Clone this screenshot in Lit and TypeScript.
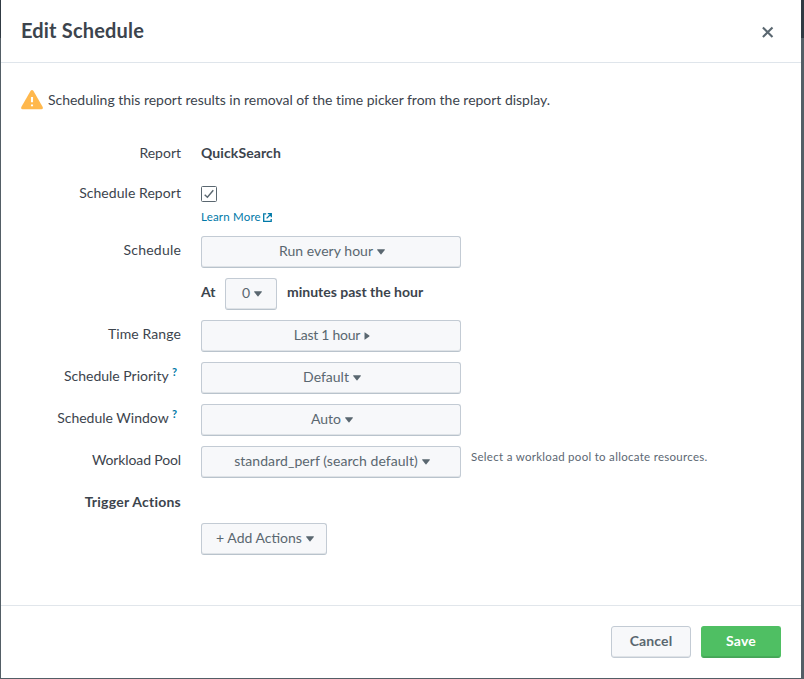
import { LitElement, html, nothing, css } from "lit";
import { customElement, property } from "lit/decorators.js";

@customElement("menu-button")
class MenuButton extends LitElement {
  @property() label = "";
  @property() caret = "down";
  @property({ type: Number }) tracking = 0;

  static styles = css`
    :host { display: flex; box-sizing: border-box; height: 32px; }
    .button {
      flex: 1; display: flex; align-items: center; justify-content: center;
      box-sizing: border-box; height: 32px; padding: 0 0 1px 2px; gap: 4px;
      border: 1px solid #c3cbd4; border-bottom-color: #b9c3cc; border-radius: 3px;
      box-shadow: inset 0 -1px 0 #dfe3e7;
      background: #f7f8fa; color: #5a6770; font: 14px "Lato", sans-serif; white-space: nowrap;
    }
    .text { margin-bottom: 2px; }
    svg { display: block; fill: #5a6770; flex: none; }
  `;

  render() {
    return html`<button class="button">
      <span class="text" style="letter-spacing:${this.tracking}px">${this.label}</span>
      ${this.caret === "right"
        ? html`<svg width="6" height="8" viewBox="0 0 6 8"><path d="M.5.7v6.6Q.5 8 1 7.5L5.3 4.4q.5-.4 0-.8L1 .5Q.5 0 .5.7z"/></svg>`
        : html`<svg width="8" height="6" viewBox="0 0 8 6"><path d="M.7.3h6.6Q8.2.3 7.8.9L4.4 5.3q-.4.5-.8 0L.2.9Q-.2.3.7.3z"/></svg>`}
    </button>`;
  }
}

@customElement("app-root")
class AppRoot extends LitElement {
  static styles = css`
    :host {
      display: block; box-sizing: border-box; width: 804px; height: 679px; padding: 0 3px 1px 1px;
      background: linear-gradient(#303a43 38px, #535e66 38px);
      color: #3c444d; font: 14px/20px "Lato", sans-serif; overflow: hidden;
    }
    .dialog { height: 678px; background: #fff; display: flex; flex-direction: column; white-space: nowrap; }
    header {
      box-sizing: border-box; height: 63px; padding: 0 27px 0 20px; border-bottom: 1px solid #dfe5eb;
      display: flex; justify-content: space-between;
    }
    h1 { margin: 18px 0 0; font-size: 20px; line-height: 25px; font-weight: 700; letter-spacing: 0.18px; }
    .close { display: block; margin-top: 26px; }
    .body { flex: 1; padding: 27px 20px 0; }
    .notice { display: flex; align-items: center; height: 20px; gap: 5px; }
    .notice span { letter-spacing: -0.02px; }
    .form { margin-top: 29px; display: flex; flex-direction: column; }
    .row { display: grid; grid-template-columns: 160px auto 1fr; column-gap: 20px; margin-bottom: 10px; }
    .label { text-align: right; padding-top: 4px; height: 21px; }
    .help { color: #0079a8; font-size: 11px; line-height: 0; vertical-align: 5px; margin-right: 4px; font-weight: 700; }
    .value { height: 30px; line-height: 28px; font-weight: 700; letter-spacing: 0.1px; }
    .check { height: 47px; }
    .box { display: block; margin: 7px 0 6px; }
    .link { display: flex; align-items: center; gap: 2px; height: 18px; color: #0079a8; font-size: 11.5px; letter-spacing: 0.2px; }
    .wide { width: 260px; }
    .inline { display: flex; font-weight: 700; line-height: 28px; }
    .at { width: 24px; }
    .small { width: 52px; margin-right: 10px; }
    .hint { margin-left: -10px; font-size: 11.5px; line-height: 22px; color: #5c6773; letter-spacing: 0.29px; }
    .add { width: 126px; }
    footer {
      box-sizing: border-box; height: 73px; padding: 20px 20px 0; border-top: 1px solid #e1e6eb;
      display: flex; justify-content: flex-end; gap: 10px;
    }
    .action {
      width: 80px; height: 32px; box-sizing: border-box; padding: 0 0 3px; border-radius: 3px;
      border: 1px solid #c3cbd4; box-shadow: inset 0 -1px 0 #dfe3e7; background: #f7f8fa; color: #5a6770;
      font: 700 14px "Lato", sans-serif; letter-spacing: 0.15px;
    }
    .save { border-color: #4fbf63 #4fbf63 #46a557; box-shadow: inset 0 -1px 0 #46ab59; background: #4fbf63; color: #fff; }
  `;

  row(label: unknown, tracking: number, content: unknown, hint: unknown = nothing) {
    return html`<div class="row"><div class="label" style="letter-spacing:${tracking}px">${label}</div>${content}${hint}</div>`;
  }

  render() {
    return html`<div class="dialog">
      <header>
        <h1>Edit Schedule</h1>
        <svg class="close" width="12" height="12" viewBox="0 0 12 12"><path d="M.9 1.4l9.6 9.6M10.5 1.4L.9 11" stroke="#5a6770" stroke-width="2.1"/></svg>
      </header>
      <div class="body">
        <div class="notice">
          <svg width="22" height="20" viewBox="0 0 22 20"><path d="M9.5.9Q11-.7 12.5.9L21.7 17q.7 2-1.3 2.3H1.6Q-.4 19 .3 17z" fill="#ffb84d"/><path d="M11 7v5.2M11 14.5v1.8" stroke="#fff" stroke-width="2.1"/></svg>
          <span>Scheduling this report results in removal of the time picker from the report display.</span>
        </div>
        <div class="form">
          ${this.row("Report", 0, html`<div class="value">QuickSearch</div>`)}
          ${this.row("Schedule Report", 0.06, html`<div class="check">
            <svg class="box" width="16" height="16" viewBox="0 0 16 16"><rect x=".5" y=".5" width="15" height="15" rx="1" fill="#fff" stroke="#5a6770"/><path d="M3.7 8.7l2.7 2.6 5.9-7" fill="none" stroke="#5a6770" stroke-width="1.4"/></svg>
            <div class="link"><span>Learn More</span><svg width="9" height="9" viewBox="0 0 9 9" fill="none" stroke="#0079a8" stroke-width="1.3"><path d="M3.2.8H.7v7.5h7.5V5.9M4.8.7h3.5v3.5M8.2.8L3.6 5.4"/></svg></div>
          </div>`)}
          ${this.row("Schedule", 0.2, html`<menu-button class="wide" label="Run every hour" tracking="0.05"></menu-button>`)}
          ${this.row("", 0, html`<div class="inline"><span class="at">At</span><menu-button class="small" label="0"></menu-button><span class="past">minutes past the hour</span></div>`)}
          ${this.row("Time Range", 0.1, html`<menu-button class="wide" label="Last 1 hour" caret="right" tracking="-0.25"></menu-button>`)}
          ${this.row(html`Schedule Priority <span class="help">?</span>`, 0, html`<menu-button class="wide" label="Default"></menu-button>`)}
          ${this.row(html`Schedule Window <span class="help">?</span>`, 0, html`<menu-button class="wide" label="Auto"></menu-button>`)}
          ${this.row("Workload Pool", -0.13, html`<menu-button class="wide" label="standard_perf (search default)" tracking="0.06"></menu-button>`, html`<div class="hint">Select a workload pool to allocate resources.</div>`)}
          ${this.row(html`<b>Trigger Actions</b>`, 0.23, nothing)}
          ${this.row("", 0, html`<menu-button class="add" label="+ Add Actions"></menu-button>`)}
        </div>
      </div>
      <footer><button class="action">Cancel</button><button class="action save">Save</button></footer>
    </div>`;
  }
}
